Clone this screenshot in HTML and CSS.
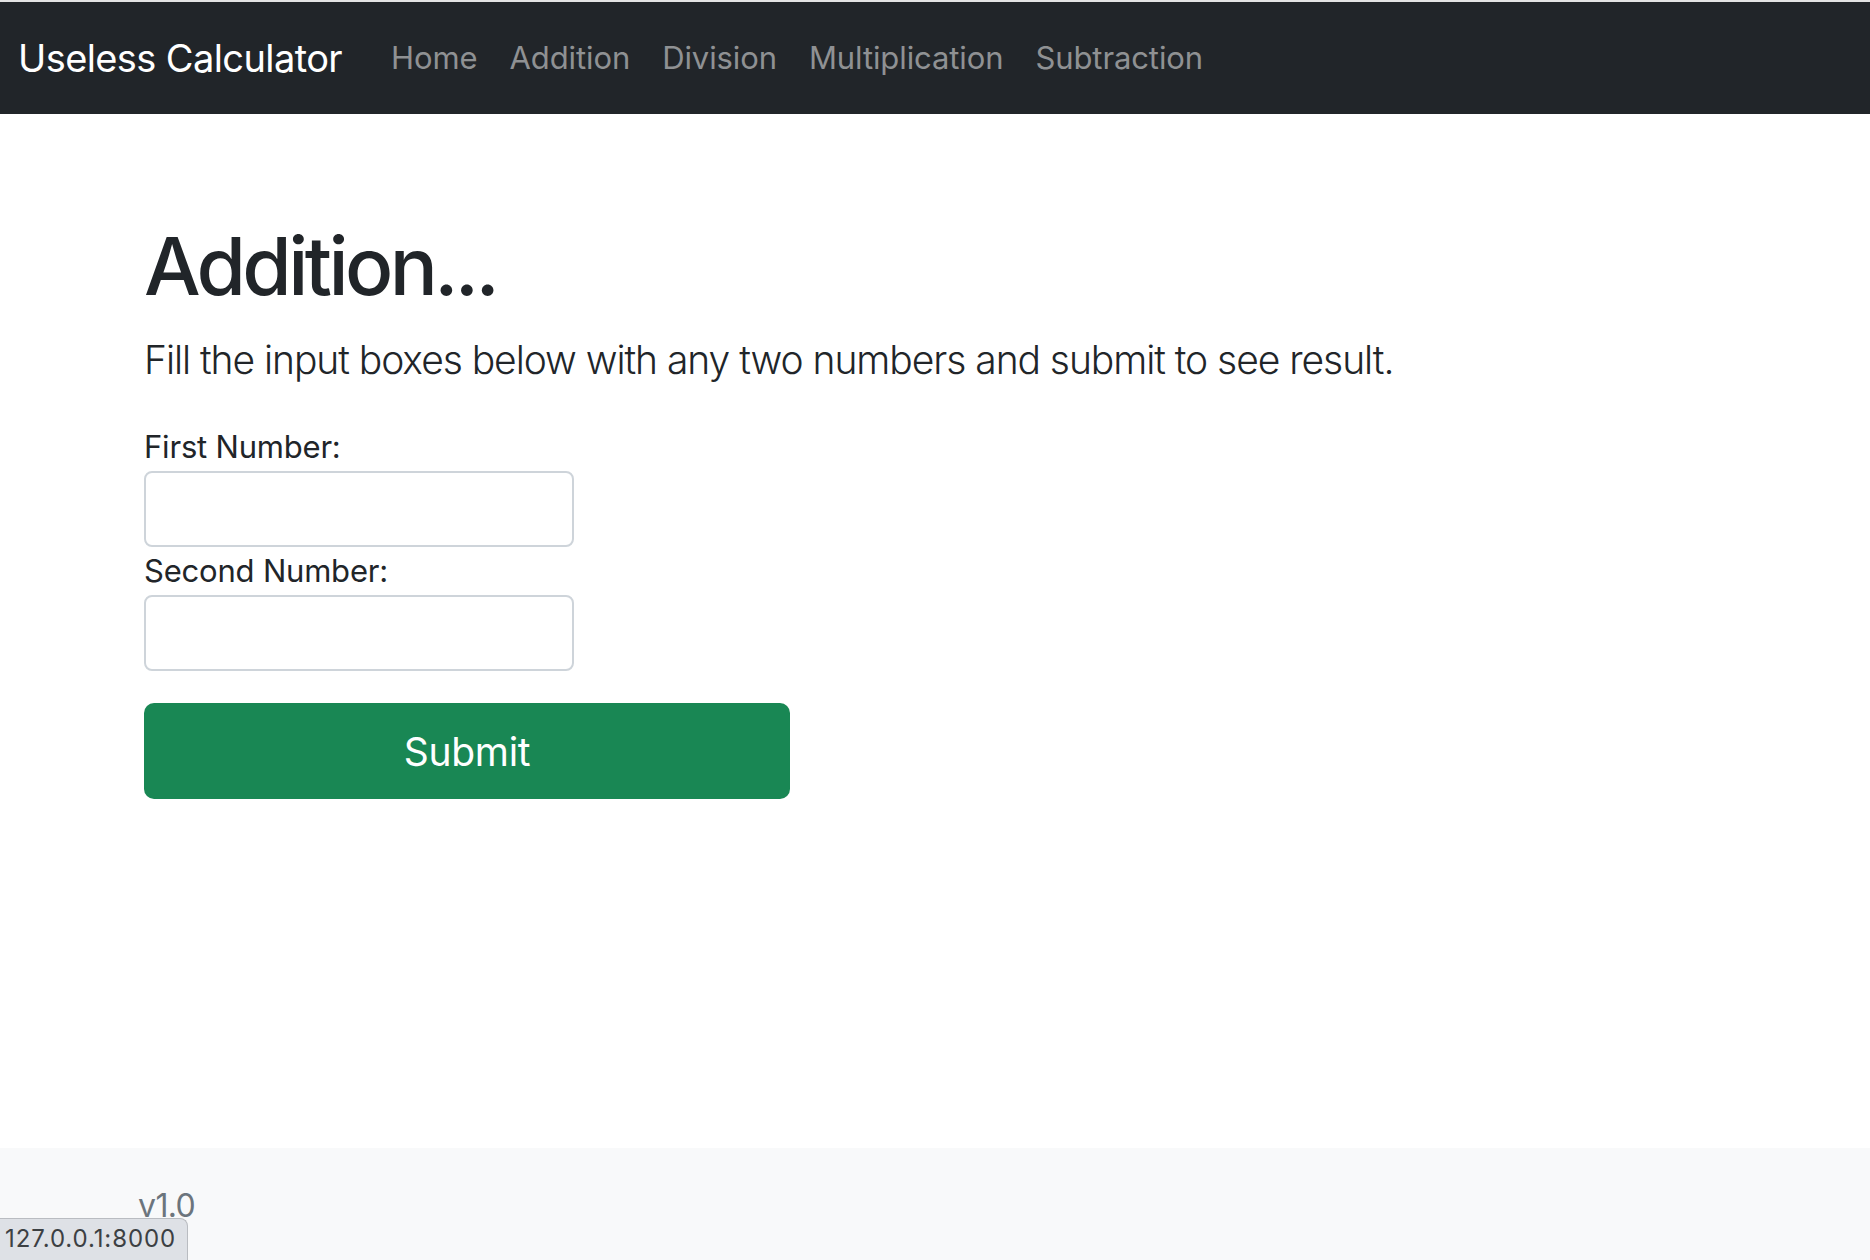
FILE: index.html
```html
<!DOCTYPE html>
<html lang="en">
<head>
<meta charset="utf-8">
<title>Useless Calculator</title>
<link rel="stylesheet" href="styles.css">
</head>
<body>
<div class="topstrip"></div>
<nav class="navbar">
  <a class="brand" href="#">Useless Calculator</a>
  <ul class="nav">
    <li><a class="nav-link" href="#">Home</a></li>
    <li><a class="nav-link" href="#">Addition</a></li>
    <li><a class="nav-link" href="#">Division</a></li>
    <li><a class="nav-link" href="#">Multiplication</a></li>
    <li><a class="nav-link" href="#">Subtraction</a></li>
  </ul>
</nav>
<main class="main">
  <h1 class="title">Addition...</h1>
  <p class="lead">Fill the input boxes below with any two numbers and submit to see result.</p>
  <form class="form">
    <label class="label" for="n1">First Number:</label>
    <input class="input" id="n1" type="text">
    <label class="label" for="n2">Second Number:</label>
    <input class="input" id="n2" type="text">
    <button class="btn-submit" type="button">Submit</button>
  </form>
</main>
<footer class="footer">
  <span class="version">v1.0</span>
</footer>
<div class="status">127.0.0.1:8000</div>
</body>
</html>
```

FILE: styles.css
```css
* { box-sizing: border-box; }
html, body { margin: 0; padding: 0; }
body {
  font-family: Inter, "Liberation Sans", sans-serif;
  color: #212529;
  background: #fff;
  height: 1260px;
  overflow: hidden;
  display: flex;
  flex-direction: column;
}
.topstrip { height: 2px; background: #e3e3e3; }
.navbar {
  background: #212529;
  height: 112px;
  display: flex;
  align-items: center;
  padding: 0 18px;
}
.brand {
  color: #fff;
  text-decoration: none;
  font-size: 38px;
  letter-spacing: -0.6px;
  margin-right: 33px;
  line-height: 60px;
}
.nav { list-style: none; margin: 0; padding: 0; display: flex; }
.nav-link {
  display: block;
  padding: 0 16px;
  color: #8f9193;
  text-decoration: none;
  font-size: 31px;
  letter-spacing: -0.1px;
  line-height: 48px;
}
.main {
  flex: 1;
  padding: 104px 0 0 144px;
}
.title {
  margin: 0 0 16px;
  font-size: 80px;
  font-weight: 500;
  letter-spacing: -3.6px;
  line-height: 96px;
}
.lead {
  margin: 0 0 33px;
  font-size: 39px;
  font-weight: 300;
  letter-spacing: -1.05px;
  line-height: 60px;
}
.form { display: flex; flex-direction: column; align-items: flex-start; }
.label {
  font-size: 31px;
  letter-spacing: -0.2px;
  line-height: 48px;
}
.input {
  width: 430px;
  height: 76px;
  border: 2px solid #ced4da;
  border-radius: 8px;
  background: #fff;
}
.btn-submit {
  margin-top: 32px;
  width: 646px;
  height: 96px;
  border: none;
  border-radius: 10px;
  background: #198754;
  color: #fff;
  font-family: inherit;
  font-size: 39px;
  letter-spacing: -0.3px;
}
.footer {
  height: 112px;
  background: #f8f9fa;
  padding: 38px 0 0 138px;
}
.version {
  color: #6c757d;
  font-size: 32px;
  letter-spacing: -0.6px;
}
.status {
  position: fixed;
  left: 0;
  bottom: 0;
  width: 188px;
  height: 42px;
  background: #dee1e6;
  border: 1px solid #b9bcc1;
  border-left: none;
  border-bottom: none;
  border-top-right-radius: 8px;
  color: #3c4043;
  font-size: 24px;
  line-height: 40px;
  padding-left: 5px;
  letter-spacing: 0.9px;
}
```
